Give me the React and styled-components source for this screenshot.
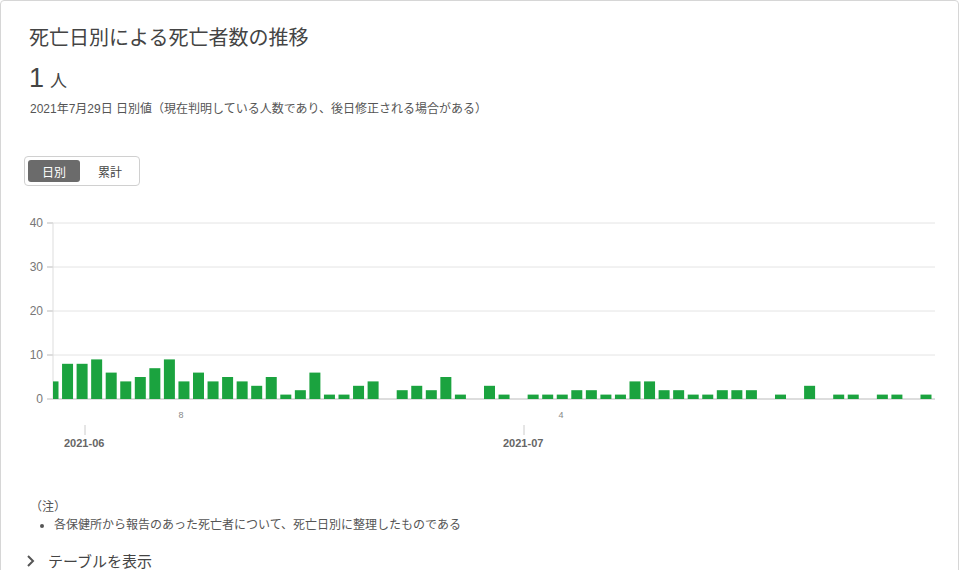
import React from "react";
import styled, { createGlobalStyle } from "styled-components";

const GlobalStyle = createGlobalStyle`
  body {
    margin: 0;
    background: #fff;
    font-family: "Liberation Sans", "Noto Sans CJK JP", sans-serif;
    color: #333;
  }
`;

const Card = styled.div`
  box-sizing: border-box;
  width: 959px;
  height: 590px;
  border: 1px solid #d6d6d6;
  border-radius: 4px;
  padding: 22px 0 0 0;
  overflow: hidden;
`;

const Title = styled.h2`
  margin: 0 0 0 28px;
  font-size: 20px;
  font-weight: 400;
  line-height: 30px;
  color: #444;
`;

const Value = styled.div`
  margin: 10px 0 0 28px;
  font-size: 27px;
  line-height: 30px;
  color: #444;
  span {
    font-size: 17px;
    margin-left: 6px;
  }
`;

const Caption = styled.div`
  margin: 4px 0 0 29px;
  font-size: 12px;
  line-height: 16px;
  color: #555;
`;

const Toggle = styled.div`
  display: inline-flex;
  margin: 39px 0 0 23px;
  padding: 3px;
  border: 1px solid #d0d0d0;
  border-radius: 4px;
`;

const ToggleButton = styled.button`
  width: 52px;
  height: 22px;
  border: none;
  border-radius: 3px;
  font-family: inherit;
  font-size: 12px;
  background: ${(p) => (p.$active ? "#6b6b6b" : "transparent")};
  color: ${(p) => (p.$active ? "#fff" : "#444")};
  padding: 0;
  & + & {
    margin-left: 4px;
  }
`;

const ChartSvg = styled.svg`
  display: block;
  margin-top: 27px;
`;

const Notes = styled.div`
  margin: 35px 0 0 29px;
  font-size: 12px;
  color: #555;
  line-height: 18px;
  ul {
    margin: 0;
    padding-left: 24px;
  }
`;

const TableToggle = styled.div`
  display: flex;
  align-items: center;
  gap: 12px;
  margin: 16px 0 0 25px;
  font-size: 15px;
  color: #444;
`;

const data = [4,8,8,9,6,4,5,7,9,4,6,4,5,4,3,5,1,2,6,1,1,3,4,0,2,3,2,5,1,0,3,1,0,1,1,1,2,2,1,1,4,4,2,2,1,1,2,2,2,0,1,0,3,0,1,1,0,1,1,0,1];

const Chart = () => {
  const x0 = 52, x1 = 934, y0 = 186, unit = 4.4, pitch = 14.55, bw = 11;
  return (
    <ChartSvg width="959" height="250" viewBox="0 0 959 250">
      <defs>
        <clipPath id="plot"><rect x={x0} y="0" width={x1 - x0} height={y0} /></clipPath>
      </defs>
      {[0, 10, 20, 30, 40].map((v) => (
        <g key={v}>
          <line x1={x0} x2={x1} y1={y0 - v * unit} y2={y0 - v * unit} stroke={v === 0 ? "#bbb" : "#e4e4e4"} />
          <line x1={x0 - 6} x2={x0} y1={y0 - v * unit} y2={y0 - v * unit} stroke="#bbb" />
          <text x={x0 - 10} y={y0 - v * unit + 4} textAnchor="end" fontSize="12" fill="#777">{v}</text>
        </g>
      ))}
      <line x1={x0} x2={x0} y1={y0 - 40 * unit} y2={y0} stroke="#ddd" />
      <g clipPath="url(#plot)">
        {data.map((v, i) =>
          v ? <rect key={i} x={x0 + i * pitch - bw / 2} y={y0 - v * unit} width={bw} height={v * unit} fill="#1ba33f" /> : null
        )}
      </g>
      <text x="180" y="205" textAnchor="middle" fontSize="9" fill="#888">8</text>
      <text x="560" y="205" textAnchor="middle" fontSize="9" fill="#888">4</text>
      <line x1="84" x2="84" y1="212" y2="222" stroke="#ccc" />
      <line x1="523" x2="523" y1="212" y2="222" stroke="#ccc" />
      <text x="63" y="234" fontSize="11" fontWeight="bold" fill="#666">2021-06</text>
      <text x="502" y="234" fontSize="11" fontWeight="bold" fill="#666">2021-07</text>
    </ChartSvg>
  );
};

export default function App() {
  return (
    <>
      <GlobalStyle />
      <Card>
        <Title>死亡日別による死亡者数の推移</Title>
        <Value>1<span>人</span></Value>
        <Caption>2021年7月29日 日別値（現在判明している人数であり、後日修正される場合がある）</Caption>
        <Toggle>
          <ToggleButton $active>日別</ToggleButton>
          <ToggleButton>累計</ToggleButton>
        </Toggle>
        <Chart />
        <Notes>
          （注）
          <ul>
            <li>各保健所から報告のあった死亡者について、死亡日別に整理したものである</li>
          </ul>
        </Notes>
        <TableToggle>
          <svg width="10" height="12" viewBox="0 0 10 12">
            <path d="M2 1l5 5-5 5" fill="none" stroke="#555" strokeWidth="2" />
          </svg>
          テーブルを表示
        </TableToggle>
      </Card>
    </>
  );
}
